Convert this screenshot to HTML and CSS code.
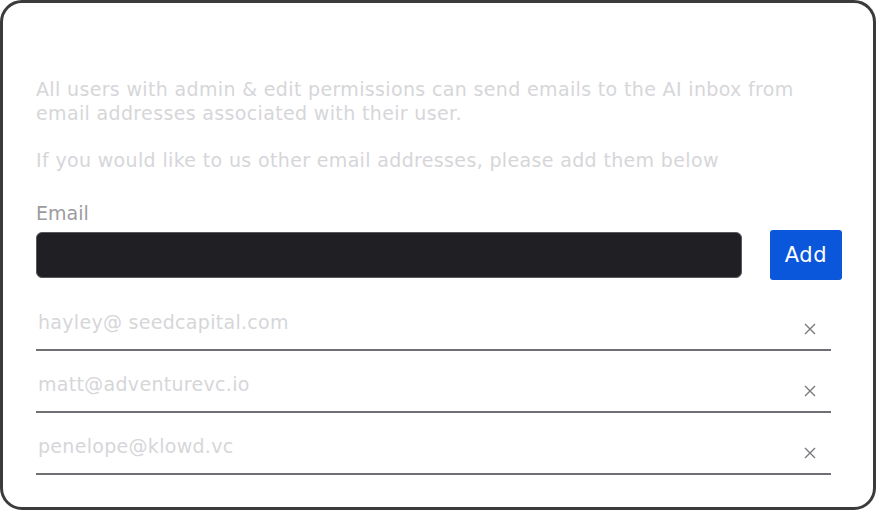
FILE: index.html
```html
<!DOCTYPE html>
<html>
<head>
<meta charset="utf-8">
<link rel="stylesheet" href="styles.css">
</head>
<body>
<div class="frame">
  <p class="intro">All users with admin &amp; edit permissions can send emails to the AI inbox from email addresses associated with their user.</p>
  <p class="intro second">If you would like to us other email addresses, please add them below</p>
  <label class="label">Email</label>
  <div class="add-row">
    <div class="input"></div>
    <button class="add-btn">Add</button>
  </div>
  <ul class="list">
    <li class="item"><span class="addr">hayley@ seedcapital.com</span><svg class="x" viewBox="0 0 12 12"><path d="M1 1L11 11M11 1L1 11"/></svg></li>
    <li class="item"><span class="addr">matt@adventurevc.io</span><svg class="x" viewBox="0 0 12 12"><path d="M1 1L11 11M11 1L1 11"/></svg></li>
    <li class="item"><span class="addr">penelope@klowd.vc</span><svg class="x" viewBox="0 0 12 12"><path d="M1 1L11 11M11 1L1 11"/></svg></li>
  </ul>
</div>
</body>
</html>
```
FILE: styles.css
```css
* { box-sizing: border-box; }
html, body { margin: 0; padding: 0; background: #fff; }
body { font-family: "DejaVu Sans", "Open Sans", sans-serif; }
.frame {
  width: 876px;
  height: 510px;
  border: 3px solid #3b3b3e;
  border-radius: 22px;
  padding: 74px 28px 0 33px;
  background: #fff;
}
.intro {
  margin: 0;
  max-width: 790px;
  font-size: 19px;
  line-height: 24px;
  color: #d6d6d9;
  letter-spacing: 0.35px;
}
.intro.second { margin-top: 23px; }
.label {
  display: block;
  margin-top: 30px;
  font-size: 19px;
  line-height: 22px;
  color: #9c9ca0;
}
.add-row {
  display: flex;
  align-items: center;
  margin-top: 6px;
}
.input {
  flex: 0 0 706px;
  height: 46px;
  background: #202024;
  border: 1px solid #5a5a5e;
  border-radius: 6px;
}
.add-btn {
  flex: 0 0 72px;
  margin-left: 28px;
  height: 50px;
  border: none;
  border-radius: 3px;
  background: #0b57dc;
  color: #fff;
  font-family: inherit;
  font-size: 21px;
  letter-spacing: 0.6px;
  padding: 0;
}
.list {
  list-style: none;
  margin: 9px 0 0 0;
  padding: 0;
  width: 795px;
}
.item {
  display: flex;
  align-items: flex-start;
  justify-content: space-between;
  height: 62px;
  border-bottom: 2px solid #6f6f74;
  padding: 0 15px 0 2px;
}
.addr {
  font-size: 19px;
  line-height: 24px;
  letter-spacing: 0.3px;
  color: #d6d6d9;
  margin-top: 21px;
}
.x {
  width: 12px;
  height: 12px;
  margin-top: 34px;
  stroke: #7a7a7e;
  stroke-width: 1.4;
  fill: none;
}
```
